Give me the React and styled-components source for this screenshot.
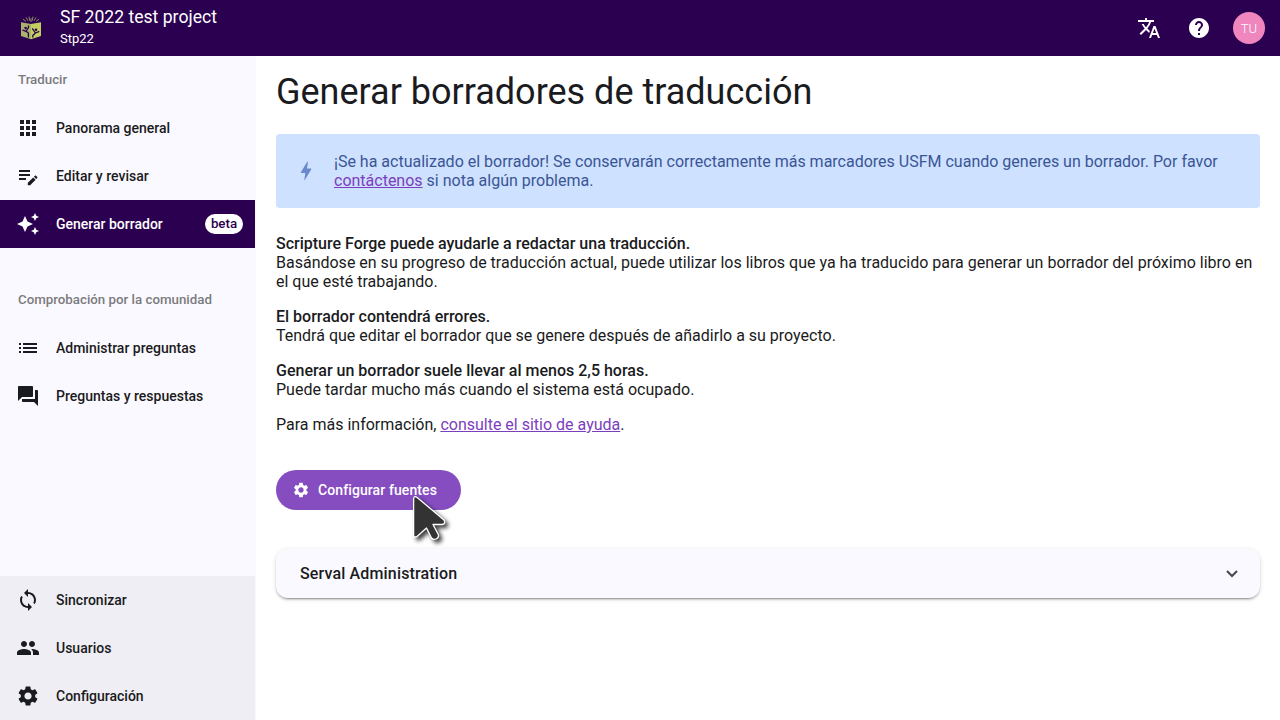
import React from 'react';
import styled, { createGlobalStyle, css } from 'styled-components';
import {
  MdApps, MdAutoAwesome, MdList, MdQuestionAnswer, MdSync,
  MdPeople, MdSettings, MdTranslate, MdHelp,
} from 'react-icons/md';

const GlobalStyle = createGlobalStyle`
  * { box-sizing: border-box; }
  html, body { margin: 0; height: 100%; background: #fff; overflow: hidden; }
  body { font-family: Roboto, sans-serif; font-size: 16px; color: #1a1b21; }
`;

const Page = styled.div`
  display: flex;
  flex-direction: column;
  height: 100vh;
`;

const TopBar = styled.header`
  display: flex;
  align-items: center;
  height: 56px;
  padding: 0 15px 0 20px;
  background: #2c0050;
  color: #fff;
`;

const Logo = styled.svg`
  width: 22px;
  height: 24px;
  flex: none;
`;

const ProjectTitle = styled.div`
  display: flex;
  flex-direction: column;
  flex: 1;
  margin-left: 18px;
  padding-bottom: 3px;
`;

const ProjectName = styled.span`
  font-size: 17.6px;
  line-height: 24px;
  margin-top: -1px;
`;

const ProjectCode = styled.span`
  font-size: 13px;
  line-height: 19px;
`;

const Actions = styled.div`
  display: flex;
  align-items: center;
  svg { width: 24px; height: 24px; margin-right: 26px; }
  svg + svg { margin-right: 22px; }
`;

const Avatar = styled.div`
  width: 32px;
  height: 32px;
  border-radius: 50%;
  display: grid;
  place-items: center;
  background: #ef87be;
  color: #fff;
  font-size: 13px;
  font-weight: 300;
`;

const Body = styled.div`
  display: flex;
  flex: 1;
  min-height: 0;
`;

const Sidebar = styled.nav`
  width: 256px;
  flex: none;
  display: flex;
  flex-direction: column;
  background: #faf9ff;
  border-right: 1px solid #faf9ff;
`;

const SectionLabel = styled.div`
  height: 48px;
  padding: 0 18px;
  line-height: 48px;
  font-size: 13.3px;
  font-weight: 500;
  color: #7b7b7d;
`;

const NavSection = styled.div`
  margin-bottom: 28px;
  &:first-child ${SectionLabel} { line-height: 47px; }
`;

const NavItem = styled.a`
  display: flex;
  align-items: center;
  height: 48px;
  padding: 0 12px 0 16px;
  font-size: 14px;
  font-weight: 500;
  color: #1a1b21;
  svg { width: 24px; height: 24px; margin-right: 16px; flex: none; }
  ${({ $active }) => $active && css`
    background: #2c0050;
    color: #fff;
  `}
`;

const Badge = styled.span`
  margin-left: auto;
  width: 38px;
  height: 20px;
  line-height: 20px;
  text-align: center;
  border-radius: 10px;
  background: #fff;
  color: #2c0050;
  font-size: 13.3px;
`;

const SidebarFooter = styled.div`
  margin-top: auto;
  background: #efeef4;
`;

const Main = styled.main`
  flex: 1;
  min-width: 0;
  padding: 15px 20px;
`;

const Title = styled.h1`
  margin: 0 0 21px;
  font-size: 36px;
  line-height: 42px;
  font-weight: 400;
`;

const Notice = styled.div`
  display: flex;
  align-items: center;
  height: 74px;
  padding: 0 20px 0 18px;
  border-radius: 4px;
  background: #cee1fe;
  color: #3a5596;
  line-height: 19px;
  svg { width: 24px; height: 24px; margin-right: 16px; color: #6989ca; flex: none; }
`;

const Link = styled.a`
  color: #7b3ebd;
  text-decoration: underline;
`;

const Copy = styled.div`
  margin-top: 26px;
  line-height: 19px;
`;

const Paragraph = styled.p`
  margin: 0 0 16px;
`;

const Strong = styled.strong`
  display: block;
  font-weight: 500;
`;

const ButtonRow = styled.div`
  position: relative;
  margin-top: 36px;
`;

const PrimaryButton = styled.button`
  display: flex;
  align-items: center;
  height: 40px;
  width: 185px;
  padding: 0 16px;
  border: 0;
  border-radius: 20px;
  background: #854dbf;
  color: #fff;
  font: 500 14px Roboto, sans-serif;
  letter-spacing: 0.1px;
  white-space: nowrap;
  svg { width: 18px; height: 18px; margin-right: 8px; flex: none; }
`;

const Pointer = styled.svg`
  position: absolute;
  left: 132px;
  top: 20px;
  width: 48px;
  height: 60px;
  filter: drop-shadow(3px 3px 2px rgba(0, 0, 0, 0.75));
`;

const Panel = styled.section`
  display: flex;
  align-items: center;
  justify-content: space-between;
  height: 49px;
  margin-top: 39px;
  padding: 0 22px 0 24px;
  border-radius: 12px;
  background: #faf9ff;
  box-shadow: 0 3px 1px -2px rgba(0, 0, 0, 0.2), 0 2px 2px 0 rgba(0, 0, 0, 0.14), 0 1px 5px 0 rgba(0, 0, 0, 0.12);
  font-weight: 500;
  letter-spacing: 0.15px;
`;

const Chevron = styled.svg`
  width: 12px;
  height: 8px;
`;

const EditNoteIcon = () => (
  <svg viewBox="0 0 24 24" fill="currentColor">
    <path d="M3 6h11v2H3zM3 10h11v2H3zM3 14h7v2H3z" />
    <path d="m17.2 13.4-5.4 5.4V21.2h2.4l5.4-5.4zM17.9 12.8l.9-.9c.4-.4 1-.4 1.4 0l.9.9c.4.4.4 1 0 1.4l-.9.9z" />
  </svg>
);

const BoltIcon = () => (
  <svg viewBox="0 0 24 24" fill="currentColor">
    <path d="M14 2.8 13 9.6h3.8q.9 0 .4.8L10.8 21H10.3l1-7H7.3q-.8 0-.4-.7L13.2 2.8Z" />
  </svg>
);

const translateItems = [
  { icon: MdApps, label: 'Panorama general' },
  { icon: EditNoteIcon, label: 'Editar y revisar' },
  { icon: MdAutoAwesome, label: 'Generar borrador', active: true, badge: 'beta' },
];
const communityItems = [
  { icon: MdList, label: 'Administrar preguntas' },
  { icon: MdQuestionAnswer, label: 'Preguntas y respuestas' },
];
const footerItems = [
  { icon: MdSync, label: 'Sincronizar' },
  { icon: MdPeople, label: 'Usuarios' },
  { icon: MdSettings, label: 'Configuración' },
];

const renderItems = (items) =>
  items.map(({ icon: Icon, label, active, badge }) => (
    <NavItem key={label} $active={active}>
      <Icon />
      {label}
      {badge && <Badge>{badge}</Badge>}
    </NavItem>
  ));

const ForgeLogo = () => (
  <Logo viewBox="0 0 22 24">
    <path d="M1 6.3 11 8V23.3L1 20Z" fill="#a9b36e" />
    <path d="M11 8 21 6.3V20L11 23.3Z" fill="#c3cf5f" />
    <path d="M3 3.2 6 5.4M6 1.4 8 4.8M9 .6 9.8 4.8M13 .6 12.2 4.8M16 1.4 14 4.8M19 3.2 16 5.4M11 2.2V6" stroke="#b9c566" strokeWidth=".7" fill="none" />
    <g fill="none" stroke="#2c0050" strokeWidth="1.3" strokeLinecap="round" strokeLinejoin="round">
      <path d="M2.8 14.2 6 15.4 8.5 11.5V9.8M6.4 15.4 8.4 17V21" />
      <path d="M18.8 15.6 15.4 17 12.6 12.8M15.4 17 12.8 19.5V21" />
    </g>
    <circle cx="5.6" cy="12" r="1.3" fill="#2c0050" />
    <circle cx="16" cy="13.8" r="1.3" fill="#2c0050" />
  </Logo>
);

export default function App() {
  return (
    <Page>
      <GlobalStyle />
      <TopBar>
        <ForgeLogo />
        <ProjectTitle>
          <ProjectName>SF 2022 test project</ProjectName>
          <ProjectCode>Stp22</ProjectCode>
        </ProjectTitle>
        <Actions>
          <MdTranslate />
          <MdHelp />
          <Avatar>TU</Avatar>
        </Actions>
      </TopBar>
      <Body>
        <Sidebar>
          <NavSection>
            <SectionLabel>Traducir</SectionLabel>
            {renderItems(translateItems)}
          </NavSection>
          <NavSection>
            <SectionLabel>Comprobación por la comunidad</SectionLabel>
            {renderItems(communityItems)}
          </NavSection>
          <SidebarFooter>{renderItems(footerItems)}</SidebarFooter>
        </Sidebar>
        <Main>
          <Title>Generar borradores de traducción</Title>
          <Notice>
            <BoltIcon />
            <div>
              ¡Se ha actualizado el borrador! Se conservarán correctamente más marcadores USFM cuando generes un
              borrador. Por favor <Link>contáctenos</Link> si nota algún problema.
            </div>
          </Notice>
          <Copy>
            <Paragraph>
              <Strong>Scripture Forge puede ayudarle a redactar una traducción.</Strong>
              Basándose en su progreso de traducción actual, puede utilizar los libros que ya ha traducido para generar
              un borrador del próximo libro en el que esté trabajando.
            </Paragraph>
            <Paragraph>
              <Strong>El borrador contendrá errores.</Strong>
              Tendrá que editar el borrador que se genere después de añadirlo a su proyecto.
            </Paragraph>
            <Paragraph>
              <Strong>Generar un borrador suele llevar al menos 2,5 horas.</Strong>
              Puede tardar mucho más cuando el sistema está ocupado.
            </Paragraph>
            <Paragraph>
              Para más información, <Link>consulte el sitio de ayuda</Link>.
            </Paragraph>
          </Copy>
          <ButtonRow>
            <PrimaryButton>
              <MdSettings />
              Configurar fuentes
            </PrimaryButton>
            <Pointer viewBox="0 0 48 60">
              <path
                d="M5.6 9.5Q5.6 5 9.2 7.5L36 30Q38 34 34 34.5H25L30.5 45Q31 48 28 49Q25 50 23.5 48L18.5 38L9 46.5Q5.6 48 5.6 45Z"
                fill="#333" stroke="#fff" strokeWidth="1.3" strokeLinejoin="round"
              />
            </Pointer>
          </ButtonRow>
          <Panel>
            Serval Administration
            <Chevron viewBox="0 0 12 8">
              <path d="m1 1 5 5 5-5" fill="none" stroke="#47464f" strokeWidth="2" />
            </Chevron>
          </Panel>
        </Main>
      </Body>
    </Page>
  );
}
